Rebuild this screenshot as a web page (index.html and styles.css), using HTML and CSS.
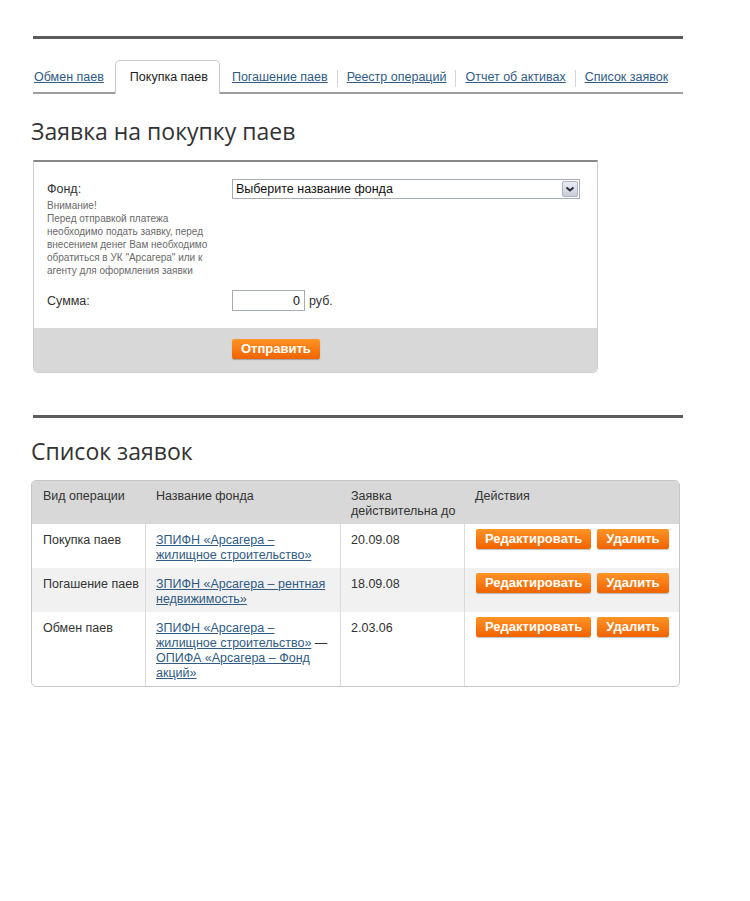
FILE: index.html
```html
<!DOCTYPE html>
<html lang="ru">
<head>
    <meta charset="UTF-8">
    <title>Заявка на покупку паев</title>
    <link rel="stylesheet" href="styles.css">
</head>
<body>
    <div class="page">
        <div class="rule"></div>

        <ul class="tabs">
            <li class="first"><a href="#">Обмен паев</a></li>
            <li class="active">Покупка паев</li>
            <li class="after-active"><a href="#">Погашение паев</a></li>
            <li class="sep"><a href="#">Реестр операций</a></li>
            <li class="sep"><a href="#">Отчет об активах</a></li>
            <li class="sep"><a href="#">Список заявок</a></li>
        </ul>

        <h1 class="title">Заявка на покупку паев</h1>

        <form class="order">
            <div class="order-body">
                <div class="order-row">
                    <label class="order-label">Фонд:</label>
                    <div class="select">
                        <span>Выберите название фонда</span>
                        <!-- select arrow -->
                        <svg class="select-arrow" width="16" height="16" viewBox="0 0 16 16">
                            <defs>
                                <linearGradient id="arrowBg" x1="0" y1="0" x2="0" y2="1">
                                    <stop offset="0" stop-color="#eceef5"/>
                                    <stop offset="1" stop-color="#c8cad8"/>
                                </linearGradient>
                            </defs>
                            <rect x="0.5" y="0.5" width="15" height="15" rx="1.5" fill="url(#arrowBg)" stroke="#aeb2c4"/>
                            <path d="M4.5 6.5 L8 9.5 L11.5 6.5" fill="none" stroke="#2b2b3a" stroke-width="2"/>
                        </svg>
                    </div>
                </div>
                <p class="note">
                    Внимание!<br>
                    Перед отправкой платежа<br>
                    необходимо подать заявку, перед<br>
                    внесением денег Вам необходимо<br>
                    обратиться в УК "Арсагера" или к<br>
                    агенту для оформления заявки
                </p>
                <div class="order-row order-sum">
                    <label class="order-label">Сумма:</label>
                    <input class="sum-input" type="text" value="0">
                    <span class="currency">руб.</span>
                </div>
            </div>
            <div class="order-foot">
                <button class="btn" type="button">Отправить</button>
            </div>
        </form>

        <div class="rule rule-list"></div>

        <h2 class="title title-list">Список заявок</h2>

        <table class="orders">
            <colgroup>
                <col class="col-type">
                <col class="col-fund">
                <col class="col-date">
                <col class="col-actions">
            </colgroup>
            <thead>
                <tr>
                    <th>Вид операции</th>
                    <th>Название фонда</th>
                    <th>Заявка<br>действительна до</th>
                    <th>Действия</th>
                </tr>
            </thead>
            <tbody>
                <tr>
                    <td>Покупка паев</td>
                    <td><a href="#">ЗПИФН «Арсагера –<br>жилищное строительство»</a></td>
                    <td>20.09.08</td>
                    <td class="actions"><button class="btn" type="button">Редактировать</button><button class="btn" type="button">Удалить</button></td>
                </tr>
                <tr>
                    <td>Погашение паев</td>
                    <td><a href="#">ЗПИФН «Арсагера – рентная<br>недвижимость»</a></td>
                    <td>18.09.08</td>
                    <td class="actions"><button class="btn" type="button">Редактировать</button><button class="btn" type="button">Удалить</button></td>
                </tr>
                <tr>
                    <td>Обмен паев</td>
                    <td><a href="#">ЗПИФН «Арсагера –<br>жилищное строительство»</a> —<br><a href="#">ОПИФА «Арсагера – Фонд<br>акций»</a></td>
                    <td>2.03.06</td>
                    <td class="actions"><button class="btn" type="button">Редактировать</button><button class="btn" type="button">Удалить</button></td>
                </tr>
            </tbody>
        </table>
    </div>
</body>
</html>
```

FILE: styles.css
```css
body {
    margin: 0;
    background: #fff;
    color: #333;
    font-family: "Liberation Sans", Arial, sans-serif;
    font-size: 12.5px;
}
a {
    color: #2f5b84;
}
.page {
    width: 650px;
    margin-left: 33px;
    padding-top: 36px;
}
.rule {
    height: 3px;
    background: #5c5c5c;
}

/* tabs */
.tabs {
    display: flex;
    margin: 21px 0 0;
    padding: 0;
    list-style: none;
    border-bottom: 2px solid #9e9e9e;
    line-height: 15px;
    white-space: nowrap;
}
.tabs li {
    height: 15px;
    padding: 9px 0;
    margin-bottom: -2px;
    border: 1px solid transparent;
    border-bottom: 0;
}
.tabs .first {
    margin-right: 10px;
}
.tabs .active {
    padding: 9px 11px 9px 14px;
    background: #fff;
    border-color: #c9c9c9;
    border-radius: 5px 5px 0 0;
    color: #222;
}
.tabs .after-active {
    margin-left: 11px;
}
.tabs .sep::before {
    content: "";
    display: inline-block;
    width: 1px;
    height: 17px;
    margin: -2px 9px -2px 7px;
    background: #d4d4d4;
    vertical-align: -4px;
}

.title {
    margin: 22px 0 14px -2px;
    font-family: "Open Sans", sans-serif;
    font-size: 23px;
    font-weight: normal;
    line-height: 30px;
    color: #333;
}

/* order form */
.order {
    box-sizing: border-box;
    width: 565px;
    margin: 0;
    border: 1px solid #cdcdcd;
    border-top: 2px solid #888;
    border-radius: 0 0 5px 5px;
    overflow: hidden;
}
.order-body {
    padding: 17px 13px;
}
.order-row {
    display: flex;
    align-items: center;
}
.order-label {
    width: 185px;
    flex: none;
}
.select {
    box-sizing: border-box;
    display: flex;
    align-items: center;
    justify-content: space-between;
    width: 348px;
    height: 20px;
    padding: 0 1px 0 3px;
    border: 1px solid #a5acb2;
    color: #111;
}
.select-arrow {
    display: block;
}
.note {
    margin: 0;
    font-size: 10px;
    line-height: 13px;
    color: #6a6a6a;
    white-space: nowrap;
}
.order-sum {
    margin-top: 13px;
}
.sum-input {
    box-sizing: border-box;
    width: 73px;
    height: 21px;
    padding: 0 4px;
    border: 1px solid #a5acb2;
    font: inherit;
    color: #111;
    text-align: right;
}
.currency {
    margin-left: 4px;
}
.order-foot {
    padding: 11px 0 13px 198px;
    background: #d8d8d8;
}

.btn {
    height: 20px;
    padding: 0 9px;
    border: 0;
    border-radius: 2px;
    background: linear-gradient(#ff9426, #f06300);
    box-shadow: 0 1px 1px rgba(0, 0, 0, 0.25);
    color: #fff;
    font-family: "Liberation Sans", Arial, sans-serif;
    font-size: 13px;
    font-weight: bold;
    line-height: 20px;
    cursor: pointer;
}

.rule-list {
    margin-top: 42px;
}
.title-list {
    margin-top: 18px;
}

/* orders table */
.orders {
    width: 649px;
    margin-left: -2px;
    table-layout: fixed;
    border-collapse: separate;
    border-spacing: 0;
    border: 1px solid #c6c6c6;
    border-radius: 5px;
    overflow: hidden;
    line-height: 15px;
    white-space: nowrap;
}
.col-type { width: 113px; }
.col-fund { width: 195px; }
.col-date { width: 124px; }
.col-actions { width: 215px; }
.orders th,
.orders td {
    padding: 9px 10px 5px 10px;
    text-align: left;
    vertical-align: top;
    border-left: 1px solid #dcdcdc;
}
.orders th:first-child,
.orders td:first-child {
    border-left: 0;
    padding-left: 11px;
}
.orders th {
    padding-top: 8px;
    background: #d8d8d8;
    font-weight: normal;
    color: #333;
    border-left-color: #d8d8d8;
}
.orders tbody tr:nth-child(2) td {
    background: #f1f1f1;
}
.orders td.actions {
    padding-top: 5px;
    padding-left: 11px;
}
.actions .btn + .btn {
    margin-left: 6px;
}
```
